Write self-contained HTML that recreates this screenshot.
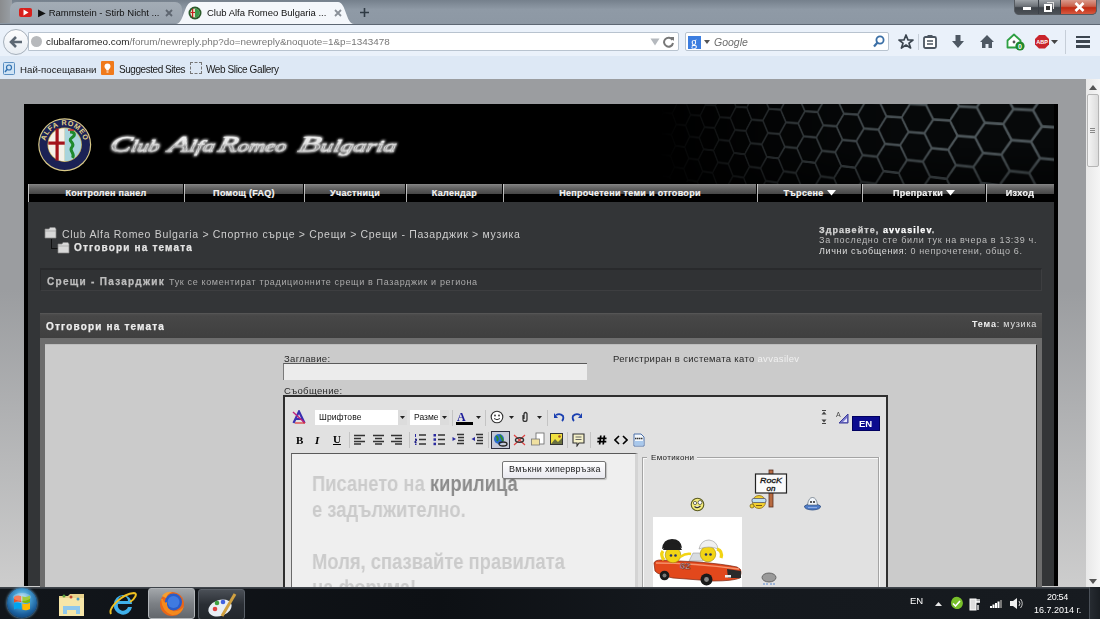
<!DOCTYPE html>
<html><head><meta charset="utf-8">
<style>
*{margin:0;padding:0;box-sizing:border-box}
html,body{width:1100px;height:619px;overflow:hidden;background:linear-gradient(#9b9da0 0,#9b9da0 290px,#cdcdcd 587px);font-family:"Liberation Sans",sans-serif}
.a{position:absolute}
.t{position:absolute;white-space:nowrap;line-height:1;will-change:transform}
/* chrome */
#tabs{left:0;top:0;width:1100px;height:24px;background:linear-gradient(#75808c,#8f9aa6 40%,#8d98a4)}
#nav{left:0;top:24px;width:1100px;height:32px;background:#eaf1fa;border-top:1px solid #5d6773}
#bm{left:0;top:56px;width:1100px;height:23px;background:#dde8f5}
#sb{left:1086px;top:79px;width:14px;height:508px;background:linear-gradient(90deg,#e8e8e8,#f6f6f6)}
#task{left:0;top:587px;width:1100px;height:32px;background:linear-gradient(90deg,#12161b,#0d1014 40%,#14181d 60%,#171b20)}
/* forum */
#frame{left:24px;top:104px;width:1034px;height:482px;background:#000}
#menu{left:28px;top:184px;width:1026px;height:18px;background:linear-gradient(#8a8a8a 0,#7a7a7a 1px,#5e5e5e 5px,#464646 10px,#000 10.5px,#000)}
#content{left:28px;top:202px;width:1026px;height:384px;background:#333537}
.mi{position:absolute;top:4.9px;-webkit-text-stroke:0.2px currentColor;height:12px;color:#f4f4f4;font-weight:bold;font-size:9px;letter-spacing:0.3px;text-align:center;line-height:1;white-space:nowrap}
.crumb{color:#c8c8c8;font-size:11.5px}
</style></head><body>
<div id="tabs" class="a">
  <div class="a" style="left:0;top:0;width:12px;height:23px;background:linear-gradient(90deg,#8a8c8e,#9aa0a6)"></div>
  <div class="a" style="left:10px;top:2px;width:172px;height:21px;background:linear-gradient(#a3acb5,#98a2ad);border-radius:7px 7px 0 0"></div>
  <div class="a" style="left:19px;top:8px;width:13px;height:9px;background:#d8201c;border-radius:2px"></div>
  <svg class="a" style="left:23px;top:9px" width="6" height="7"><path d="M0.5 0.5 L5.5 3.5 L0.5 6.5Z" fill="#fff"/></svg>
  <div class="t" style="left:38px;top:8px;font-size:9.5px;color:#111">▶ Rammstein - Stirb Nicht ...</div>
  <svg class="a" style="left:165px;top:9px" width="8" height="8"><path d="M1 1L7 7M7 1L1 7" stroke="#5e6670" stroke-width="1.8"/></svg>
  <svg class="a" style="left:176px;top:0" width="190" height="24"><path d="M0 24 C8 24 8 2 16 2 L162 2 C170 2 170 24 178 24Z" fill="#f4f7fb"/></svg>
  <svg class="a" style="left:188px;top:6px" width="14" height="14"><circle cx="7" cy="7" r="6.5" fill="#2a5a2a"/><circle cx="7" cy="7" r="4.6" fill="#e8e0c8"/><path d="M7 2.4A4.6 4.6 0 0 1 7 11.6Z" fill="#3a9a4a"/><path d="M4.6 2.8V11.2M2.6 6.5H7" stroke="#c82020" stroke-width="1.2"/></svg>
  <div class="t" style="left:207px;top:8px;font-size:9.5px;color:#111">Club Alfa Romeo Bulgaria ...</div>
  <svg class="a" style="left:334px;top:9px" width="8" height="8"><path d="M1 1L7 7M7 1L1 7" stroke="#8a9098" stroke-width="1.8"/></svg>
  <svg class="a" style="left:359px;top:7px" width="11" height="11"><path d="M5.5 1V10M1 5.5H10" stroke="#2f3a44" stroke-width="1.6"/></svg>
  <div class="a" style="left:1014px;top:0;width:83px;height:15px;border-radius:0 0 5px 5px;background:#3c4148;border:1px solid #555a60;border-top:none;overflow:hidden">
    <div class="a" style="left:0;top:0;width:23px;height:14px;background:linear-gradient(#9ea3a8,#6c7177 45%,#3e4349 55%,#4c5157)"></div>
    <div class="a" style="left:24px;top:0;width:21px;height:14px;background:linear-gradient(#9ea3a8,#6c7177 45%,#3e4349 55%,#4c5157)"></div>
    <div class="a" style="left:46px;top:0;width:37px;height:14px;background:linear-gradient(#d99a8c,#c9604a 45%,#c12a12 55%,#d65a40)"></div>
    <div class="a" style="left:8px;top:7px;width:8px;height:3px;background:#fff"></div>
    <div class="a" style="left:32px;top:2px;width:7px;height:7px;border:1px solid #ddd;border-left:none;border-bottom:none"></div><div class="a" style="left:29px;top:4px;width:8px;height:8px;border:2px solid #fff;background:#333"></div>
    <svg class="a" style="left:59px;top:2px" width="11" height="10"><path d="M1.5 1L9.5 9M9.5 1L1.5 9" stroke="#fff" stroke-width="2.6"/></svg>
  </div>
</div>
<div id="nav" class="a">
  <div class="a" style="left:28px;top:7px;width:651px;height:19px;background:#fff;border:1px solid #b8c3cf;border-radius:0 2px 2px 0"></div>
  <div class="a" style="left:3px;top:4px;width:26px;height:26px;border-radius:50%;background:linear-gradient(#fdfdfe,#e8edf3);border:1px solid #a6b0bb"></div>
  <svg class="a" style="left:9px;top:11px" width="14" height="12"><path d="M7 1L2 6L7 11M2.5 6H13" stroke="#5c6773" stroke-width="2.6" fill="none"/></svg>
  <div class="a" style="left:31px;top:11px;width:11px;height:11px;border-radius:50%;background:#b7b9bc"></div>
  <div class="t" style="left:46px;top:12px;font-size:9.9px;color:#222">clubalfaromeo.com<span style="color:#777">/forum/newreply.php?do=newreply&amp;noquote=1&amp;p=1343478</span></div>
  <svg class="a" style="left:650px;top:13px" width="10" height="8"><path d="M0.5 0.5H9.5L5 7.5Z" fill="#b5b9be"/></svg>
  <svg class="a" style="left:663px;top:11px" width="12" height="12"><path d="M9.5 4A4.5 4.5 0 1 0 10 7" stroke="#777" stroke-width="2" fill="none"/><path d="M7 1L11 1L11 5Z" fill="#777"/></svg>
  <div class="a" style="left:685px;top:7px;width:204px;height:19px;background:#fff;border:1px solid #b8c3cf;border-radius:2px"></div>
  <div class="a" style="left:688px;top:11px;width:13px;height:13px;background:#3b7de0"></div>
  <div class="t" style="left:691px;top:11px;font-size:12px;color:#fff;font-family:'Liberation Serif',serif">g</div>
  <svg class="a" style="left:704px;top:15px" width="6" height="4"><path d="M0 0H6L3 4Z" fill="#555"/></svg>
  <div class="t" style="left:714px;top:12px;font-size:10.5px;color:#6d6d6d;font-style:italic">Google</div>
  <svg class="a" style="left:873px;top:10px" width="12" height="13"><circle cx="7" cy="5" r="3.6" stroke="#3b6fa6" stroke-width="1.8" fill="none"/><path d="M4.5 7.5L1 11.5" stroke="#3b6fa6" stroke-width="2.2"/></svg>
  <svg class="a" style="left:898px;top:9px" width="16" height="15"><path d="M8 1L10 6H15L11 9.2L12.6 14L8 11L3.4 14L5 9.2L1 6H6Z" stroke="#3c4650" stroke-width="1.7" fill="none" stroke-linejoin="round"/></svg>
  <div class="a" style="left:918px;top:9px;width:1px;height:16px;background:#c6ced8"></div>
  <svg class="a" style="left:923px;top:9px" width="14" height="15"><rect x="1" y="3" width="12" height="11" rx="1.5" stroke="#4b5560" stroke-width="1.8" fill="#fff"/><rect x="4.5" y="1" width="5" height="3" fill="#4b5560"/><path d="M4 7H10M4 10H10" stroke="#4b5560" stroke-width="1.3"/></svg>
  <svg class="a" style="left:951px;top:9px" width="14" height="15"><path d="M4.5 1H9.5V7H13L7 14L1 7H4.5Z" fill="#4e5863"/></svg>
  <svg class="a" style="left:979px;top:9px" width="16" height="14"><path d="M8 1L15 8H13V14H9.5V10H6.5V14H3V8H1Z" fill="#4e5863"/></svg>
  <svg class="a" style="left:1006px;top:8px" width="20" height="18"><path d="M8 1.5L14.5 7.5V14.5H1.5V7.5Z" stroke="#2ea043" stroke-width="1.8" fill="#fff" stroke-linejoin="round"/><circle cx="8" cy="9" r="1.4" fill="#555"/><circle cx="14" cy="13" r="4.6" fill="#1f8a2c"/><text x="14" y="16" font-size="7" fill="#fff" text-anchor="middle" font-family="Liberation Sans" font-weight="bold">0</text></svg>
  <svg class="a" style="left:1034px;top:9px" width="16" height="15"><path d="M5 1H11L15 5V10.5L11 14.5H5L1 10.5V5Z" fill="#c9242b"/><text x="8" y="10" font-size="5.5" fill="#fff" text-anchor="middle" font-family="Liberation Sans" font-weight="bold">ABP</text></svg>
  <svg class="a" style="left:1051px;top:15px" width="7" height="4"><path d="M0 0H7L3.5 4Z" fill="#444"/></svg>
  <div class="a" style="left:1065px;top:5px;width:1px;height:24px;background:#c6ced8"></div>
  <div class="a" style="left:1076px;top:11px;width:14px;height:12px;background:linear-gradient(#3c4650 0,#3c4650 2.5px,transparent 2.5px,transparent 4.5px,#3c4650 4.5px,#3c4650 7px,transparent 7px,transparent 9px,#3c4650 9px)"></div>
</div>
<div id="bm" class="a">
  <svg class="a" style="left:3px;top:6px" width="12" height="13"><rect x="0.5" y="0.5" width="11" height="12" rx="1" fill="#cfe3f5" stroke="#5b8fc2"/><circle cx="6" cy="5.5" r="2.5" stroke="#2f6fb0" stroke-width="1.2" fill="none"/><path d="M4 7.5L2 10" stroke="#2f6fb0" stroke-width="1.4"/></svg>
  <div class="t" style="left:20px;top:9px;font-size:9.7px;color:#1a1a1a">Най-посещавани</div>
  <div class="a" style="left:101px;top:5px;width:13px;height:14px;background:#f07a1c;border-radius:1px"></div>
  <svg class="a" style="left:104px;top:7px" width="7" height="10"><path d="M3.5 0.5A3 3 0 0 1 6.5 3.5C6.5 5.5 4.5 6 4.5 7.5H2.5C2.5 6 0.5 5.5 0.5 3.5A3 3 0 0 1 3.5 0.5ZM2.5 8.5H4.5V9.5H2.5Z" fill="#fff"/></svg>
  <div class="t" style="left:119px;top:9px;font-size:10px;letter-spacing:-0.45px;color:#1a1a1a">Suggested Sites</div>
  <div class="a" style="left:190px;top:6px;width:12px;height:12px;border:1px dashed #777"></div>
  <div class="t" style="left:206px;top:9px;font-size:10px;letter-spacing:-0.4px;color:#1a1a1a">Web Slice Gallery</div>
</div>
<div id="sb" class="a">
  <svg class="a" style="left:3px;top:6px" width="8" height="5"><path d="M0 5L4 0L8 5Z" fill="#555"/></svg>
  <div class="a" style="left:1px;top:15px;width:12px;height:73px;background:linear-gradient(90deg,#f4f4f4,#dcdcdc);border:1px solid #b5b5b5;border-radius:2px"></div>
  <div class="a" style="left:4px;top:49px;width:5px;height:5px;background:linear-gradient(#888 0,#888 1px,transparent 1px,transparent 2px,#888 2px,#888 3px,transparent 3px,transparent 4px,#888 4px)"></div>
  <svg class="a" style="left:3px;top:500px" width="8" height="5"><path d="M0 0L4 5L8 0Z" fill="#555"/></svg>
</div>

<div id="frame" class="a"></div>
<svg class="a" style="left:28px;top:104px" width="1026" height="80">
  <defs>
    <pattern id="hex" width="48" height="24" patternUnits="userSpaceOnUse" patternTransform="translate(0 6) rotate(6)">
      <path d="M0 12L8 0L24 0L32 12L24 24L8 24L0 12M32 12L48 12" stroke="#566064" stroke-width="1.7" fill="none"/>
    </pattern>
    <linearGradient id="hg" x1="0" y1="0" x2="1" y2="0.35">
      <stop offset="0" stop-color="#fff" stop-opacity="0"/>
      <stop offset="0.6" stop-color="#fff" stop-opacity="0"/>
      <stop offset="0.8" stop-color="#fff" stop-opacity="0.75"/>
      <stop offset="1" stop-color="#fff" stop-opacity="1"/>
    </linearGradient>
    <mask id="hm"><rect width="1026" height="80" fill="url(#hg)"/></mask>
    <linearGradient id="silver" x1="0" y1="0" x2="0" y2="1">
      <stop offset="0" stop-color="#ffffff"/><stop offset="0.5" stop-color="#e0e0e0"/><stop offset="0.62" stop-color="#8a8a8a"/><stop offset="1" stop-color="#f0f0f0"/>
    </linearGradient>
    <filter id="glow" x="-10%" y="-50%" width="120%" height="200%"><feGaussianBlur stdDeviation="1.8" result="b"/><feMerge><feMergeNode in="b"/><feMergeNode in="b"/><feMergeNode in="SourceGraphic"/></feMerge></filter>
    <path id="arc" d="M17 41A19.7 19.7 0 0 1 56.4 41"/>
  </defs>
  <rect width="1026" height="80" fill="#000"/>
  
  <circle cx="36.7" cy="40.7" r="26.5" fill="#d8c887"/>
  <circle cx="36.7" cy="40.7" r="25.3" fill="#1b2255"/>
  <circle cx="36.7" cy="40.7" r="17.2" fill="#c9b35a"/>
  <path d="M36.7 24.2A16.5 16.5 0 0 0 36.7 57.2Z" fill="#f4f1e8"/>
  <path d="M36.7 24.2A16.5 16.5 0 0 1 36.7 57.2Z" fill="#a8d4dc"/>
  <rect x="27.5" y="24.5" width="3.2" height="32" fill="#a3131b"/>
  <rect x="20.3" y="37.5" width="16.4" height="3.2" fill="#a3131b"/>
  <path d="M42 28C47 28 48 31 43.5 34C39 37 48 39 44 43C40 47 48 49 44.5 54" stroke="#1e8a2c" stroke-width="3" fill="none"/>
  <path d="M40 26H46" stroke="#c02020" stroke-width="1.5"/>
  <text font-size="7.2" fill="#e2d28a" font-family="Liberation Sans" font-weight="bold" letter-spacing="0.6"><textPath href="#arc" startOffset="50%" text-anchor="middle">ALFA ROMEO</textPath></text>
  
<g transform="translate(0 47.3) skewX(-14) translate(0 -47.3)">
  <text x="81" y="47.3" font-family="Liberation Serif" font-style="italic" fill="url(#silver)" stroke="#f0f0f0" stroke-width="0.4" filter="url(#glow)" textLength="49.6" lengthAdjust="spacingAndGlyphs"><tspan font-size="23">C</tspan><tspan font-size="16" dy="0">lub</tspan></text>
  <text x="139.5" y="47.3" font-family="Liberation Serif" font-style="italic" fill="url(#silver)" stroke="#f0f0f0" stroke-width="0.4" filter="url(#glow)" textLength="46.5" lengthAdjust="spacingAndGlyphs"><tspan font-size="23">A</tspan><tspan font-size="16" dy="0">lfa</tspan></text>
  <text x="189" y="47.3" font-family="Liberation Serif" font-style="italic" fill="url(#silver)" stroke="#f0f0f0" stroke-width="0.4" filter="url(#glow)" textLength="68.5" lengthAdjust="spacingAndGlyphs"><tspan font-size="23">R</tspan><tspan font-size="16" dy="0">omeo</tspan></text>
  <text x="269" y="47.3" font-family="Liberation Serif" font-style="italic" fill="url(#silver)" stroke="#f0f0f0" stroke-width="0.4" filter="url(#glow)" textLength="98.4" lengthAdjust="spacingAndGlyphs"><tspan font-size="23">B</tspan><tspan font-size="16" dy="0">ulgaria</tspan></text>
  </g>
  </svg>
<div class="a" style="left:560px;top:104px;width:494px;height:80px;overflow:hidden;perspective:600px;perspective-origin:100% 50%">
  <svg style="position:absolute;left:-700px;top:-60px;transform:rotateY(-28deg) rotateZ(4deg);transform-origin:100% 50%;filter:blur(0.35px)" width="1200" height="200">
    <defs><pattern id="hex2" width="52" height="24" patternUnits="userSpaceOnUse" patternTransform="scale(1.35)" x="6" y="2"><rect width="52" height="24" fill="#07090a"/><path d="M0 12L8.7 0L26 0L34.7 12L26 24L8.7 24L0 12M34.7 12L52 12" stroke="#4d565a" stroke-width="2.1" fill="none"/></pattern></defs>
    <rect width="1200" height="200" fill="url(#hex2)"/>
  </svg>
</div>
<div class="a" style="left:560px;top:104px;width:494px;height:80px;background:linear-gradient(90deg,#000 0,#000 100px,rgba(0,0,0,.8) 150px,rgba(0,0,0,.4) 230px,rgba(0,0,0,.1) 330px,rgba(0,0,0,0) 400px)"></div>
<div class="a" style="left:560px;top:104px;width:494px;height:80px;background:linear-gradient(0deg,rgba(0,0,0,.45),rgba(0,0,0,0) 45%)"></div>
<div id="menu" class="a">
  <div class="mi" style="left:0px;width:156px">Контролен панел</div>
  <div class="mi" style="left:156px;width:120px">Помощ (FAQ)</div>
  <div class="mi" style="left:276px;width:102px">Участници</div>
  <div class="mi" style="left:378px;width:97px">Календар</div>
  <div class="mi" style="left:475px;width:254px">Непрочетени теми и отговори</div>
  <div class="mi" style="left:729px;width:105px">Търсене<svg width="9" height="6" style="margin-left:3px;vertical-align:0"><path d="M0 0H9L4.5 5.5Z" fill="#fff"/></svg></div>
  <div class="mi" style="left:834px;width:124px">Препратки<svg width="9" height="6" style="margin-left:3px;vertical-align:0"><path d="M0 0H9L4.5 5.5Z" fill="#fff"/></svg></div>
  <div class="mi" style="left:958px;width:68px">Изход</div>
  <div class="a" style="left:155px;top:0;width:1px;height:18px;background:#000"></div><div class="a" style="left:156px;top:0;width:1px;height:18px;background:linear-gradient(#d0d0d0,#a8a8a8)"></div>
  <div class="a" style="left:275px;top:0;width:1px;height:18px;background:#000"></div><div class="a" style="left:276px;top:0;width:1px;height:18px;background:linear-gradient(#d0d0d0,#a8a8a8)"></div>
  <div class="a" style="left:377px;top:0;width:1px;height:18px;background:#000"></div><div class="a" style="left:378px;top:0;width:1px;height:18px;background:linear-gradient(#d0d0d0,#a8a8a8)"></div>
  <div class="a" style="left:474px;top:0;width:1px;height:18px;background:#000"></div><div class="a" style="left:475px;top:0;width:1px;height:18px;background:linear-gradient(#d0d0d0,#a8a8a8)"></div>
  <div class="a" style="left:728px;top:0;width:1px;height:18px;background:#000"></div><div class="a" style="left:729px;top:0;width:1px;height:18px;background:linear-gradient(#d0d0d0,#a8a8a8)"></div>
  <div class="a" style="left:833px;top:0;width:1px;height:18px;background:#000"></div><div class="a" style="left:834px;top:0;width:1px;height:18px;background:linear-gradient(#d0d0d0,#a8a8a8)"></div>
  <div class="a" style="left:957px;top:0;width:1px;height:18px;background:#000"></div><div class="a" style="left:958px;top:0;width:1px;height:18px;background:linear-gradient(#d0d0d0,#a8a8a8)"></div>
  <div class="a" style="left:0;top:0;width:1px;height:18px;background:#bdbdbd"></div>
</div>
<div id="content" class="a"></div>
<div class="a" style="left:40px;top:268px;width:1002px;height:23px;background:#303234;border-top:2px solid #292a2c;border-left:1px solid #292a2c;border-bottom:1px solid #3d3e40;border-right:1px solid #3d3e40"></div>
<div class="a" style="left:40px;top:313px;width:1002px;height:25px;background:linear-gradient(#4d4d4d,#474747 10%,#3f3f3f);border-top:1px solid #555"></div>
<div class="a" style="left:40px;top:338px;width:1002px;height:260px;background:#6d6d6d"></div>
<div class="a" style="left:45px;top:344px;width:992px;height:260px;background:#cbcbcb;border-right:1px solid #2a2a2a;border-top:1px solid #bdbdbd"></div>
<svg class="a" style="left:44px;top:226px" width="14" height="13"><path d="M1 3H5L6 1.5H11L12 3V12H1Z" fill="#d8d8d8" stroke="#888" stroke-width="0.7"/><path d="M1 5H12" stroke="#999" stroke-width="0.6"/></svg>
<div class="a" style="left:51px;top:239px;width:1px;height:10px;background:#111"></div><div class="a" style="left:51px;top:248px;width:7px;height:1px;background:#111"></div>
<svg class="a" style="left:57px;top:241px" width="14" height="13"><path d="M1 3H5L6 1.5H11L12 3V12H1Z" fill="#d8d8d8" stroke="#888" stroke-width="0.7"/><path d="M1 5H12" stroke="#999" stroke-width="0.6"/></svg>
<div class="t" style="left:61.6px;top:229.1px;font-size:10.5px;color:#cdcdcd;letter-spacing:0.69px;">Club Alfa Romeo Bulgaria &gt; Спортно сърце &gt; Срещи &gt; Срещи - Пазарджик &gt; музика</div>
<div class="t" style="left:73.7px;top:243px;-webkit-text-stroke:0.25px currentColor;font-size:10px;color:#e4e4e4;font-weight:bold;letter-spacing:1.17px;">Отговори на темата</div>
<div class="t" style="left:819.2px;top:225.5px;-webkit-text-stroke:0.25px currentColor;font-size:9px;color:#d4d4d4;font-weight:bold;letter-spacing:1.06px;">Здравейте, <span style="color:#fff">avvasilev</span>.</div>
<div class="t" style="left:819.2px;top:235.8px;font-size:9px;color:#bdbdbd;letter-spacing:0.69px;">За последно сте били тук на вчера в 13:39 ч.</div>
<div class="t" style="left:819.2px;top:246.5px;font-size:9px;color:#bdbdbd;letter-spacing:0.64px;"><span style="color:#dcdcdc">Лични съобщения</span>: 0 непрочетени, общо 6.</div>
<div class="t" style="left:46.5px;top:277px;-webkit-text-stroke:0.25px currentColor;font-size:10px;color:#bdbdbd;font-weight:bold;letter-spacing:1.29px;">Срещи - Пазарджик</div>
<div class="t" style="left:168.7px;top:277.8px;font-size:9px;color:#aaaaaa;letter-spacing:0.65px;">Тук се коментират традиционните срещи в Пазарджик и региона</div>
<div class="t" style="left:45.5px;top:321.7px;-webkit-text-stroke:0.25px currentColor;font-size:10px;color:#ececec;font-weight:bold;letter-spacing:1.17px;">Отговори на темата</div>
<div class="t" style="right:63px;top:320.13px;font-size:9px;color:#e0e0e0;letter-spacing:0.8px"><b style="color:#f0f0f0">Тема</b>: музика</div>
<div id="form" class="a" style="left:0;top:0;width:1100px;height:586px;pointer-events:none">
  <div class="t" style="left:283.6px;top:353.76px;font-size:9.5px;color:#2a2a2a;letter-spacing:0.33px;">Заглавие:</div>
  <div class="a" style="left:283px;top:363px;width:304px;height:17px;background:#ececec;border-top:1px solid #5a5a5a;border-left:1px solid #7a7a7a"></div>
  <div class="t" style="left:612.5px;top:353.76px;font-size:9.5px;color:#2a2a2a;letter-spacing:0.31px;">Регистриран в системата като <span style="color:#f0f0f0">avvasilev</span></div>
  <div class="t" style="left:283.6px;top:385.76px;font-size:9.5px;color:#2a2a2a;letter-spacing:0.34px;">Съобщение:</div>
  <div class="a" style="left:283px;top:395px;width:605px;height:200px;background:#e1e1e1;border:2px solid #2e2e2e;border-bottom:none"></div>
  <!-- row1 -->
  <svg class="a" style="left:292px;top:410px" width="15" height="15"><path d="M1.5 13L7 1.5L12.5 13M4 9H10" stroke="#3a2fb0" stroke-width="2.2" fill="none"/><path d="M1 2L13 13" stroke="#c0207a" stroke-width="1.4"/><path d="M3 13H13" stroke="#d33" stroke-width="1.2"/></svg>
  <div class="a" style="left:315px;top:410px;width:92px;height:15px;background:#fff"></div>
  <div class="a" style="left:398px;top:410px;width:9px;height:15px;background:#dcdcdc"></div>
  <svg class="a" style="left:400px;top:416px" width="5" height="3"><path d="M0 0H5L2.5 3Z" fill="#222"/></svg>
  <div class="t" style="left:318.9px;top:413.19px;font-size:8.5px;color:#111;letter-spacing:0.1px;">Шрифтове</div>
  <div class="a" style="left:410px;top:410px;width:39px;height:15px;background:#fff"></div>
  <div class="a" style="left:440px;top:410px;width:9px;height:15px;background:#dcdcdc"></div>
  <svg class="a" style="left:442px;top:416px" width="5" height="3"><path d="M0 0H5L2.5 3Z" fill="#222"/></svg>
  <div class="t" style="left:413.7px;top:413.19px;font-size:8.5px;color:#111;letter-spacing:0px;">Разме</div>
  <div class="a" style="left:452px;top:410px;width:1px;height:16px;background:#c4c4c4"></div>
  <div class="t" style="left:457px;top:411px;font-size:12px;font-weight:bold;color:#1a1a9a;font-family:'Liberation Serif',serif">A</div>
  <div class="a" style="left:456px;top:422px;width:17px;height:3px;background:#000"></div>
  <svg class="a" style="left:476px;top:416px" width="5" height="3"><path d="M0 0H5L2.5 3Z" fill="#222"/></svg>
  <div class="a" style="left:485px;top:410px;width:1px;height:16px;background:#c4c4c4"></div>
  <svg class="a" style="left:490px;top:410px" width="14" height="14"><circle cx="7" cy="7" r="5.8" fill="#fff" stroke="#333" stroke-width="1.1"/><circle cx="5" cy="5.5" r="0.9" fill="#333"/><circle cx="9" cy="5.5" r="0.9" fill="#333"/><path d="M4 8.5Q7 11 10 8.5" stroke="#333" stroke-width="1" fill="none"/></svg>
  <svg class="a" style="left:509px;top:416px" width="5" height="3"><path d="M0 0H5L2.5 3Z" fill="#222"/></svg>
  <svg class="a" style="left:521px;top:411px" width="8" height="11"><path d="M2 4V8.5A2 2 0 0 0 6 8.5V3A1.5 1.5 0 0 0 3 3V8" stroke="#333" stroke-width="1.3" fill="none"/></svg>
  <svg class="a" style="left:537px;top:416px" width="5" height="3"><path d="M0 0H5L2.5 3Z" fill="#222"/></svg>
  <div class="a" style="left:547px;top:410px;width:1px;height:16px;background:#c4c4c4"></div>
  <svg class="a" style="left:553px;top:412px" width="12" height="10"><path d="M3 3Q7 1 10 4Q11 7 9 9" stroke="#1a3fb0" stroke-width="1.8" fill="none"/><path d="M1 1V6H5Z" fill="#1a3fb0"/></svg>
  <svg class="a" style="left:571px;top:412px" width="12" height="10"><path d="M9 3Q5 1 2 4Q1 7 3 9" stroke="#1a3fb0" stroke-width="1.8" fill="none"/><path d="M11 1V6H7Z" fill="#1a3fb0"/></svg>
  <svg class="a" style="left:820px;top:409px" width="8" height="16"><path d="M2 1.5H6M2 14.5H6" stroke="#444" stroke-width="1"/><path d="M4 2.5L1.5 5.5H6.5Z M4 13.5L1.5 10.5H6.5Z" fill="#444"/></svg>
  <div class="t" style="left:836px;top:411px;font-size:7px;color:#444">A</div>
  <svg class="a" style="left:837px;top:412px" width="13" height="12"><path d="M2 11L11 2V11Z" fill="#7a7acc" stroke="#3a3a9a" stroke-width="1"/><path d="M6 10L10 6V10Z" fill="#e8e8ff"/></svg>
  <div class="a" style="left:852px;top:416px;width:28px;height:15px;background:#0b0b8f;border:1px solid #000060"></div>
  <div class="t" style="left:859px;top:419px;font-size:9.5px;font-weight:bold;color:#fff">EN</div>
  <!-- row2 -->
  <div class="t" style="left:296px;top:435px;font-size:11px;font-weight:bold;color:#000;font-family:'Liberation Serif',serif">B</div>
  <div class="t" style="left:315px;top:435px;font-size:11px;font-weight:bold;font-style:italic;color:#000;font-family:'Liberation Serif',serif">I</div>
  <div class="t" style="left:333px;top:434px;font-size:11px;font-weight:bold;color:#000;font-family:'Liberation Serif',serif;text-decoration:underline">U</div>
  <div class="a" style="left:349px;top:432px;width:1px;height:16px;background:#c4c4c4"></div>
  <svg class="a" style="left:354px;top:434px" width="12" height="11"><path d="M0 1.5H11M0 4.5H7M0 7.5H11M0 10H7" stroke="#333" stroke-width="1.5"/></svg>
  <svg class="a" style="left:373px;top:434px" width="12" height="11"><path d="M0 1.5H11M2 4.5H9M0 7.5H11M2 10H9" stroke="#333" stroke-width="1.5"/></svg>
  <svg class="a" style="left:391px;top:434px" width="12" height="11"><path d="M0 1.5H11M4 4.5H11M0 7.5H11M4 10H11" stroke="#333" stroke-width="1.5"/></svg>
  <div class="a" style="left:409px;top:432px;width:1px;height:16px;background:#c4c4c4"></div>
  <svg class="a" style="left:414px;top:433px" width="13" height="13"><path d="M5 2H12M5 6.5H12M5 11H12" stroke="#333" stroke-width="1.4"/><path d="M1.5 1V4M1 6H2.5V8H1V10H2.5M1 11.5H2.5" stroke="#2a2aa0" stroke-width="1"/></svg>
  <svg class="a" style="left:433px;top:433px" width="13" height="13"><path d="M5 2H12M5 6.5H12M5 11H12" stroke="#333" stroke-width="1.4"/><rect x="0.5" y="1" width="2.5" height="2.5" fill="#2a2aa0"/><rect x="0.5" y="5.3" width="2.5" height="2.5" fill="#2a2aa0"/><rect x="0.5" y="9.7" width="2.5" height="2.5" fill="#2a2aa0"/></svg>
  <svg class="a" style="left:452px;top:433px" width="13" height="13"><path d="M5 1.5H12M6 4.5H12M6 7.5H12M5 10.5H12" stroke="#333" stroke-width="1.4"/><path d="M4 6L0.5 4V8Z" fill="#2a2aa0"/></svg>
  <svg class="a" style="left:471px;top:433px" width="13" height="13"><path d="M5 1.5H12M6 4.5H12M6 7.5H12M5 10.5H12" stroke="#333" stroke-width="1.4"/><path d="M0.5 6L4 4V8Z" fill="#2a2aa0"/></svg>
  <div class="a" style="left:488px;top:432px;width:1px;height:16px;background:#c4c4c4"></div>
  <div class="a" style="left:491px;top:431px;width:19px;height:18px;background:#c5c9d8;border:1px solid #2e2e3e"></div>
  <svg class="a" style="left:493px;top:433px" width="15" height="14"><circle cx="6" cy="6" r="5" fill="#2a6ad0"/><path d="M3 3Q6 5 4 8M7 2Q9 5 10 8" stroke="#2e8a2e" stroke-width="2" fill="none"/><ellipse cx="10" cy="11" rx="4" ry="2" stroke="#222" stroke-width="1.3" fill="none"/></svg>
  <svg class="a" style="left:513px;top:434px" width="13" height="12"><path d="M1 1L12 11M12 1L1 11" stroke="#e04040" stroke-width="1.2"/><ellipse cx="6.5" cy="6" rx="4" ry="2.3" stroke="#333" stroke-width="1.5" fill="none"/></svg>
  <svg class="a" style="left:531px;top:432px" width="14" height="15"><rect x="5" y="1" width="8" height="11" fill="#fff" stroke="#666" stroke-width="0.8"/><rect x="0.5" y="7" width="8" height="6" fill="#f0e0a0" stroke="#777" stroke-width="0.8"/></svg>
  <svg class="a" style="left:550px;top:433px" width="13" height="12"><rect x="0.5" y="0.5" width="12" height="11" fill="#f0e040" stroke="#333"/><path d="M1 11L5 6L8 9L12 5V11Z" fill="#6a7040"/><circle cx="9.5" cy="3.5" r="1.3" fill="#a05020"/></svg>
  <div class="a" style="left:567px;top:432px;width:1px;height:16px;background:#c4c4c4"></div>
  <svg class="a" style="left:572px;top:433px" width="13" height="14"><path d="M1 1H12V10H7L5 13V10H1Z" fill="#f4f0c8" stroke="#333" stroke-width="1.1"/><path d="M3.5 4H9.5M3.5 6.5H9.5" stroke="#555" stroke-width="0.9"/></svg>
  <div class="a" style="left:590px;top:432px;width:1px;height:16px;background:#c4c4c4"></div>
  <svg class="a" style="left:597px;top:435px" width="10" height="10"><path d="M3.8 0.5L2.6 9.5M7.4 0.5L6.2 9.5M0.5 3.3H9.5M0.3 6.7H9.3" stroke="#000" stroke-width="1.7"/></svg>
  <svg class="a" style="left:614px;top:435px" width="14" height="10"><path d="M5 1L1 5L5 9M9 1L13 5L9 9" stroke="#000" stroke-width="1.6" fill="none"/></svg>
  <svg class="a" style="left:633px;top:433px" width="12" height="14"><path d="M1 1H8L11 4V13H1Z" fill="#f4f8fc" stroke="#4a6fa8" stroke-width="1"/><path d="M1.5 8H10.5V12.5H1.5Z" fill="#a8c8ec"/><path d="M2 5.5H10" stroke="#333" stroke-width="1.3" stroke-dasharray="1.5 0.5"/></svg>
  <!-- textarea -->
  <div class="a" style="left:291px;top:453px;width:347px;height:140px;background:#efefef;border-top:1px solid #5a5a5a;border-left:1px solid #6a6a6a;border-right:3px solid #d4d4d4"></div>
  <div class="t" style="left:312px;top:471px;font-size:22px;font-weight:bold;color:#cbcbcb;line-height:26px;transform:scaleX(0.836);transform-origin:0 0">Писането на <span style="color:#8c8c8c">кирилица</span><br>е задължително.<br><br>Моля, спазвайте правилата<br>на форума!</div>
  <!-- fieldset -->
  <div class="a" style="left:642px;top:457px;width:237px;height:140px;border:1px solid #a4a4a4;border-bottom:none;box-shadow:inset 1px 1px 0 #f8f8f8,1px 0 0 #f8f8f8"></div>
  <div class="a" style="left:647px;top:452px;width:50px;height:10px;background:#e1e1e1"></div>
  <div class="t" style="left:650.6px;top:454.26px;font-size:8px;color:#1a1a1a;letter-spacing:0.35px;">Емотикони</div>

  <!-- smilies -->
  <svg class="a" style="left:690px;top:497px" width="15" height="15"><circle cx="7.5" cy="7.5" r="6.3" fill="#f2ea7a" stroke="#5a5a20" stroke-width="1.1"/><circle cx="5" cy="6" r="1.6" fill="#fff" stroke="#333" stroke-width="0.7"/><circle cx="10" cy="5.5" r="2" fill="#fff" stroke="#333" stroke-width="0.7"/><path d="M4.5 9.5Q7.5 12 10.5 9" stroke="#333" stroke-width="1.1" fill="#fff"/></svg>
  <svg class="a" style="left:748px;top:468px" width="42" height="42">
    <rect x="21" y="2" width="4" height="37" fill="#b86a40" stroke="#5a3020" stroke-width="0.8"/>
    <rect x="7.5" y="6" width="31" height="19" fill="#fafafa" stroke="#222" stroke-width="1.2"/>
    <text x="23" y="14.5" font-size="8" font-family="Liberation Sans" font-style="italic" text-anchor="middle" fill="#111" stroke="#111" stroke-width="0.3" textLength="22" lengthAdjust="spacingAndGlyphs">RocK</text>
    <text x="23" y="22.5" font-size="8" font-family="Liberation Sans" font-style="italic" text-anchor="middle" fill="#111" stroke="#111" stroke-width="0.3">on</text>
    <circle cx="11" cy="34" r="6.5" fill="#f2d030" stroke="#8a6a10" stroke-width="0.8"/>
    <rect x="4" y="30.5" width="14" height="4" rx="1.5" fill="#bfe0f0" stroke="#446" stroke-width="0.7"/>
    <path d="M8 37.5H14" stroke="#6a4a10" stroke-width="0.9"/>
    <circle cx="4" cy="38" r="2" fill="#f2d030" stroke="#6a5a10" stroke-width="0.7"/>
  </svg>
  <svg class="a" style="left:803px;top:496px" width="19" height="15"><path d="M1.5 10Q9.5 4.5 17.5 10Q18 13.5 9.5 14Q1 13.5 1.5 10Z" fill="#4f7cc8" stroke="#2a4a80" stroke-width="0.8"/><path d="M4.5 9Q5.5 1.5 9.5 1.5Q13.5 1.5 14.5 9Z" fill="#f2f6fb" stroke="#456" stroke-width="0.6"/><circle cx="8" cy="6" r="1.1" fill="#333"/><circle cx="11" cy="6" r="1.1" fill="#333"/><path d="M5 11.5H14" stroke="#9ab8e8" stroke-width="0.8"/></svg>
  <div class="a" style="left:653px;top:517px;width:89px;height:70px;background:#fff;overflow:hidden">
    <svg width="89" height="70">
      <path d="M36 44L40 36L52 36L50 44Z" fill="#d8dce0" stroke="#888" stroke-width="0.5"/>
      <path d="M1 46Q2 43 8 43L45 45Q70 47 84 50Q89 52 88 56L87 61Q80 64 60 64L20 61Q5 58 2 54Z" fill="#e2481c" stroke="#7a2410" stroke-width="0.7"/>
      <path d="M3 46Q40 46 86 52" stroke="#f7946e" stroke-width="1.3" fill="none"/>
      <path d="M74 52L88 54V61L75 61Z" fill="#2a2a2a"/>
      <rect x="72" y="58" width="6" height="2.5" fill="#eee"/>
      <circle cx="11.5" cy="58.5" r="4.8" fill="#1a1a1a"/><circle cx="11.5" cy="58.5" r="2" fill="#777"/>
      <circle cx="53.5" cy="62.5" r="6" fill="#1a1a1a"/><circle cx="53.5" cy="62.5" r="2.4" fill="#888"/>
      <text x="32" y="52" font-size="9.5" text-anchor="middle" font-family="Liberation Sans" font-weight="bold" fill="#f4f0f0" stroke="#6a1a10" stroke-width="0.6">62</text>
      <path d="M9 32Q10 22 19 22Q28 22 29 31Q20 27 9 32Z" fill="#1e1e1e"/>
      <circle cx="20" cy="38" r="7.8" fill="#f2d414" stroke="#a08a10" stroke-width="0.6"/>
      <path d="M10 33Q12 26 20 26Q27 27 29 33" fill="#1e1e1e"/>
      <circle cx="18" cy="38.5" r="1.3" fill="#24306a"/><circle cx="22.5" cy="38.5" r="1.3" fill="#24306a"/>
      <circle cx="55" cy="37" r="7.8" fill="#f2d414" stroke="#a08a10" stroke-width="0.6"/>
      <path d="M46 32Q48 23 56 23Q64 24 65 32Q56 28 46 32Z" fill="#f0f0f0" stroke="#999" stroke-width="0.6"/>
      <circle cx="53" cy="37.5" r="1.3" fill="#24306a"/><circle cx="57.5" cy="37.5" r="1.3" fill="#24306a"/>
      <path d="M11 43Q7 38 10 34" stroke="#f2d414" stroke-width="3.2" fill="none"/>
      <path d="M64 32Q70 34 68 41" stroke="#f2d414" stroke-width="3.2" fill="none"/>
      <path d="M27 40Q33 36 38 37" stroke="#f2d414" stroke-width="2.5" fill="none"/>
    </svg>
  </div>
  <svg class="a" style="left:761px;top:572px" width="16" height="14"><ellipse cx="8" cy="5.5" rx="7" ry="4.5" fill="#9a9a9a" stroke="#555" stroke-width="0.8"/><path d="M3 11V13M6 11V13M10 11V13M13 11V13" stroke="#5a8ad0" stroke-width="1"/></svg>
  <!-- tooltip -->
  <div class="a" style="left:502px;top:461px;width:104px;height:18px;background:linear-gradient(#fff,#e8e8ef);border:1px solid #767676;border-radius:2px;box-shadow:1px 1px 1px rgba(0,0,0,.2)"></div>
  <div class="t" style="left:508.6px;top:465.33px;font-size:9px;color:#1a1a1a;letter-spacing:0.25px;">Вмъкни хипервръзка</div>
</div>
<div id="task" class="a">
  <div class="a" style="left:0;top:0;width:1100px;height:2px;background:linear-gradient(#454b52,#2a2f35)"></div>
  <div class="a" style="left:7px;top:1px;width:30px;height:30px;border-radius:50%;background:radial-gradient(circle at 50% 35%,#bfe3f5 0,#4aa3d6 30%,#1a5e9c 65%,#0d2f55 100%);box-shadow:0 0 3px #7cc8ff"></div>
  <svg class="a" style="left:12px;top:6px" width="20" height="20"><path d="M2 4Q5.5 1.5 9.3 3.2V9.2Q5.5 7.5 2 9.6Z" fill="#f25022"/><path d="M10.3 3.3Q14 5 18 2.6V8.8Q14 11 10.3 9.3Z" fill="#7fba00"/><path d="M2 10.6Q5.5 8.5 9.3 10.3V16.3Q5.5 14.6 2 16.6Z" fill="#00a4ef"/><path d="M10.3 10.4Q14 12 18 9.8V16Q14 18.2 10.3 16.4Z" fill="#ffb900"/><ellipse cx="10" cy="4" rx="9" ry="4" fill="#fff" opacity="0.25"/></svg>
  <svg class="a" style="left:58px;top:5px" width="28" height="25"><path d="M1 4H10L12 2H26V24H1Z" fill="#e9d48e"/><rect x="1" y="6" width="25" height="18" fill="#f6e6a8"/><circle cx="6" cy="4" r="1.5" fill="#5aa040"/><circle cx="13" cy="5" r="1.5" fill="#c04a30"/><circle cx="20" cy="7" r="1.5" fill="#4a9ac0"/><path d="M5 14H22V22H18V18H9V22H5Z" fill="#8fc8ec"/></svg>
  <svg class="a" style="left:108px;top:3px" width="30" height="28"><path d="M6 14A9 9 0 1 1 24 14H10A5 5 0 0 0 20 17H24A9 9 0 0 1 6 14Z" fill="#3fb0ea"/><path d="M10 11H20A5 5 0 0 0 10 11Z" fill="#0e1419"/><path d="M3 24C0 18 14 4 26 3C30 3 27 9 22 12" stroke="#f0c020" stroke-width="2" fill="none"/></svg>
  <div class="a" style="left:148px;top:1px;width:47px;height:31px;border-radius:3px;background:linear-gradient(#a2a6aa,#7c8085 50%,#63676c);border:1px solid #b0b4b8"></div>
  <svg class="a" style="left:158px;top:3px" width="28" height="28"><circle cx="14" cy="14" r="12" fill="#e8661a"/><circle cx="15.5" cy="12" r="8.5" fill="#2a5cc8"/><circle cx="15.5" cy="12" r="6" fill="#3f7ae0"/><path d="M3 9Q4 22 14 25Q23 26 26 16Q22 22 15 21Q8 19 9 12Q6 14 5 9Z" fill="#f48a1c"/><path d="M4 6Q8 1 14 2Q9 4 8 8Z" fill="#f6a030"/></svg>
  <div class="a" style="left:198px;top:2px;width:47px;height:31px;border-radius:3px;background:linear-gradient(#4a4f56,#2a2e34 50%,#23272c);border:1px solid #5a6068"></div>
  <svg class="a" style="left:207px;top:5px" width="30" height="27"><ellipse cx="13" cy="16" rx="12" ry="8" fill="#e8eef4" transform="rotate(-20 13 16)"/><circle cx="8" cy="17" r="2.3" fill="#e04040"/><circle cx="10" cy="11" r="2.3" fill="#40a040"/><circle cx="16" cy="10" r="2.3" fill="#4060e0"/><path d="M28 2L15 24" stroke="#d0a040" stroke-width="3"/></svg>
  <div class="t" style="left:910px;top:9.37px;font-size:9.5px;color:#fff;letter-spacing:-0.2px;">EN</div>
  <svg class="a" style="left:935px;top:15px" width="7" height="4"><path d="M0 4L3.5 0L7 4Z" fill="#e8e8e8"/></svg>
  <div class="a" style="left:951px;top:10px;width:12px;height:12px;border-radius:45% 55% 50% 50%;background:#78bf2a;transform:rotate(20deg)"></div>
  <svg class="a" style="left:952px;top:13px" width="9" height="7"><path d="M1 3.5L3.5 6L8 1" stroke="#fff" stroke-width="1.6" fill="none"/></svg>
  <svg class="a" style="left:969px;top:9px" width="12" height="15"><rect x="1" y="3" width="6" height="11" fill="#ddd" stroke="#fff"/><path d="M7 6H11M8 3V6M10 3V6M9 9V14" stroke="#fff" stroke-width="1.3"/></svg>
  <svg class="a" style="left:990px;top:13px" width="12" height="8"><rect x="0" y="6" width="2" height="2" fill="#fff"/><rect x="2.5" y="4.5" width="2" height="3.5" fill="#fff"/><rect x="5" y="3" width="2" height="5" fill="#fff"/><rect x="7.5" y="1.5" width="2" height="6.5" fill="#fff"/><rect x="10" y="0" width="2" height="8" fill="#777"/></svg>
  <svg class="a" style="left:1009px;top:10px" width="14" height="13"><path d="M1 4H4L8 1V12L4 9H1Z" fill="#eee"/><path d="M10 4Q12 6.5 10 9M11.5 2Q15 6.5 11.5 11" stroke="#ccc" stroke-width="1" fill="none"/></svg>
  <div class="t" style="left:1046.5px;top:6.13px;font-size:9px;color:#fff;letter-spacing:-0.3px;">20:54</div>
  <div class="t" style="left:1033.6px;top:18.53px;font-size:9px;color:#fff;letter-spacing:0px;">16.7.2014 г.</div>
  <div class="a" style="left:1089px;top:0;width:11px;height:32px;border-left:1px solid #4a5058;background:linear-gradient(90deg,#262b31,#1a1e23)"></div>
</div>
</body></html>
